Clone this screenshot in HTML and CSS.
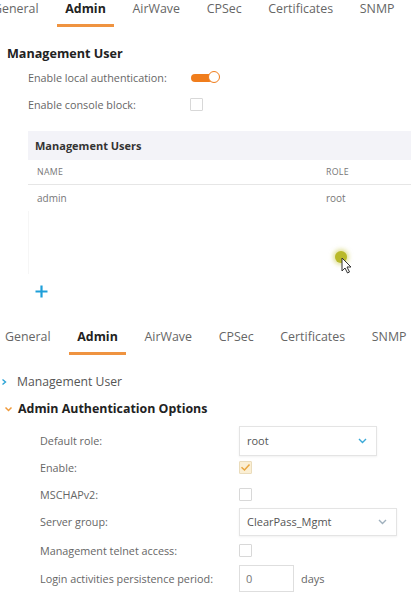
FILE: index.html
```html
<!DOCTYPE html>
<html lang="en">
<head>
<meta charset="utf-8">
<title>Admin</title>
<link rel="stylesheet" href="styles.css">
</head>
<body>
<div class="page">
  <section class="panel panel-top">
    <nav class="tabs tabs-top">
      <span class="tab">General</span>
      <span class="tab active">Admin</span>
      <span class="tab">AirWave</span>
      <span class="tab">CPSec</span>
      <span class="tab">Certificates</span>
      <span class="tab">SNMP</span>
    </nav>
    <h2 class="section-title">Management User</h2>
    <div class="opt-row">
      <span class="opt-label">Enable local authentication:</span>
      <span class="toggle"><span class="knob"></span></span>
    </div>
    <div class="opt-row">
      <span class="opt-label">Enable console block:</span>
      <span class="checkbox"></span>
    </div>
    <div class="table">
      <div class="table-title">Management Users</div>
      <div class="table-head"><span class="col-name">NAME</span><span class="col-role">ROLE</span></div>
      <div class="table-row"><span class="col-name">admin</span><span class="col-role">root</span></div>
      <div class="table-empty"></div>
    </div>
    <div class="add">
      <svg width="13" height="13" viewBox="0 0 13 13"><path d="M6.5 0.5v12M0.5 6.5h12" stroke="#1e9fd9" stroke-width="2.2" fill="none"/></svg>
    </div>
    <div class="cursor">
      <span class="glow"></span>
      <svg class="arrow" width="12" height="17" viewBox="0 0 12 17"><path d="M1 1v13l3-3 2.5 5 2-1-2.5-5h4z" fill="#fff" stroke="#333" stroke-width="1" stroke-linejoin="round"/></svg>
    </div>
  </section>

  <section class="panel panel-bottom">
    <nav class="tabs tabs-bottom">
      <span class="tab">General</span>
      <span class="tab active">Admin</span>
      <span class="tab">AirWave</span>
      <span class="tab">CPSec</span>
      <span class="tab">Certificates</span>
      <span class="tab">SNMP</span>
    </nav>
    <div class="group collapsed">
      <svg class="chev" width="8" height="8" viewBox="0 0 8 8"><path d="M2.5 1.5l3 2.5-3 2.5" stroke="#2aa3d6" stroke-width="1.4" fill="none"/></svg>
      <span>Management User</span>
    </div>
    <div class="group expanded">
      <svg class="chev" width="9" height="8" viewBox="0 0 9 8"><path d="M1.5 2.5l3 3 3-3" stroke="#ef9a3c" stroke-width="1.5" fill="none"/></svg>
      <span>Admin Authentication Options</span>
    </div>
    <div class="form">
      <div class="form-row">
        <span class="form-label">Default role:</span>
        <span class="select select-short">root
          <svg class="sel-chev" width="9" height="6" viewBox="0 0 9 6"><path d="M1 1l3.5 3.5 3.5-3.5" stroke="#3aa9d8" stroke-width="1.4" fill="none"/></svg>
        </span>
      </div>
      <div class="form-row">
        <span class="form-label">Enable:</span>
        <span class="checkbox checked">
          <svg width="11" height="9" viewBox="0 0 11 9"><path d="M1.5 4.2l3 2.8 5-5.5" stroke="#e9a640" stroke-width="1.5" fill="none"/></svg>
        </span>
      </div>
      <div class="form-row">
        <span class="form-label">MSCHAPv2:</span>
        <span class="checkbox"></span>
      </div>
      <div class="form-row">
        <span class="form-label">Server group:</span>
        <span class="select select-long">ClearPass_Mgmt
          <svg class="sel-chev" width="9" height="6" viewBox="0 0 9 6"><path d="M1 1l3.5 3.5 3.5-3.5" stroke="#9fb0bd" stroke-width="1.4" fill="none"/></svg>
        </span>
      </div>
      <div class="form-row spaced">
        <span class="form-label">Management telnet access:</span>
        <span class="checkbox"></span>
      </div>
      <div class="form-row spaced">
        <span class="form-label">Login activities persistence period:</span>
        <span class="num-input">0</span>
        <span class="unit">days</span>
      </div>
    </div>
  </section>
</div>
</body>
</html>
```

FILE: styles.css
```css
html, body {
  margin: 0;
  padding: 0;
  background: #ffffff;
}

body {
  font-family: "Open Sans", "Noto Sans", sans-serif;
  color: #555;
  width: 411px;
  height: 600px;
  overflow: hidden;
}

.page {
  display: flex;
  flex-direction: column;
}

.panel {
  position: relative;
  overflow: hidden;
}

.panel-top {
  height: 328px;
}

/* Tabs */
.tabs {
  display: flex;
  gap: 10.7px;
  height: 27px;
  white-space: nowrap;
}

.tabs-top {
  margin-left: -15px;
}

.tabs-bottom {
  margin-left: -3px;
}

.tab {
  padding: 0 8px 6px;
  font-size: 12.4px;
  line-height: 18px;
  color: #666;
  border-bottom: 3px solid transparent;
}

.tab.active {
  color: #222;
  font-weight: 700;
  border-bottom-color: #ef9340;
}

/* Top section */
.section-title {
  margin: 17px 0 0 7px;
  font-size: 12.6px;
  line-height: 20px;
  font-weight: 700;
  color: #222;
}

.opt-row {
  display: flex;
  align-items: center;
  height: 27px;
  padding-left: 28px;
}

.opt-label {
  width: 162px;
  font-size: 10.8px;
  color: #666;
}

.toggle {
  position: relative;
  width: 22px;
  height: 8px;
  margin-left: 1px;
  border-radius: 4px;
  background: #f07d1c;
}

.toggle .knob {
  position: absolute;
  right: -7px;
  top: -2.5px;
  width: 10px;
  height: 10px;
  border: 1.5px solid #f07d1c;
  border-radius: 50%;
  background: #fff;
}

.checkbox {
  display: flex;
  align-items: center;
  justify-content: center;
  box-sizing: border-box;
  width: 13px;
  height: 13px;
  border: 1px solid #d8d8d8;
  border-radius: 1px;
  background: #fff;
}

.checkbox.checked {
  background: #fbefd4;
  border-color: #eadcbc;
}

.table {
  margin: 13px 0 0 28px;
}

.table-title {
  height: 29px;
  line-height: 29px;
  padding-left: 7px;
  background: #f3f3f8;
  font-size: 11px;
  font-weight: 700;
  color: #333;
}

.table-head, .table-row {
  display: flex;
  align-items: center;
}

.table-head {
  height: 24px;
  border-bottom: 1px solid #e6e6e6;
  font-size: 8.8px;
  letter-spacing: 0.3px;
  color: #777;
}

.table-row {
  height: 26px;
  font-size: 10px;
  color: #777;
}

.col-name {
  width: 289px;
  padding-left: 9px;
}

.table-empty {
  height: 63px;
  border-left: 1px solid #f6f6f6;
}

.add {
  display: flex;
  margin: 11px 0 0 35px;
}

.cursor {
  position: absolute;
  left: 334px;
  top: 250px;
  width: 20px;
  height: 24px;
}

.cursor .glow {
  position: absolute;
  left: 1px;
  top: 1px;
  width: 12px;
  height: 12px;
  border-radius: 50%;
  background: #b9b92a;
  box-shadow: 0 0 4px 2px rgba(205, 205, 90, 0.6);
}

.cursor .arrow {
  position: absolute;
  left: 7px;
  top: 7px;
}

/* Bottom section */
.group {
  display: flex;
  align-items: center;
  height: 27px;
}

.group.collapsed {
  margin-top: 13px;
  font-size: 12.2px;
  color: #555;
}

.group.collapsed .chev {
  margin: 0 9px 0 0;
}

.group.expanded {
  font-size: 12.4px;
  font-weight: 700;
  color: #222;
}

.group.expanded .chev {
  margin: 0 5px 0 4px;
}

.form {
  display: flex;
  flex-direction: column;
  margin-top: 5px;
  padding-left: 40px;
}

.form-row {
  display: flex;
  align-items: center;
  height: 27px;
}

.form-row.spaced {
  margin-top: 1.5px;
}

.form-label {
  width: 199px;
  font-size: 10.8px;
  color: #666;
}

.select {
  position: relative;
  box-sizing: border-box;
  display: flex;
  align-items: center;
  height: 30px;
  padding-left: 7px;
  border: 1px solid #e4e4e4;
  box-shadow: 0 1px 2px rgba(0, 0, 0, 0.06);
  font-size: 11px;
  color: #555;
  background: #fff;
}

.select-short {
  width: 138px;
}

.select-long {
  width: 158px;
  height: 28px;
}

.sel-chev {
  position: absolute;
  right: 9px;
  top: 50%;
  margin-top: -3px;
}

.num-input {
  box-sizing: border-box;
  display: flex;
  align-items: center;
  width: 55px;
  height: 27px;
  padding-left: 6px;
  border: 1px solid #dedede;
  font-size: 11px;
  color: #777;
}

.unit {
  margin-left: 7px;
  font-size: 11px;
  color: #666;
}
```
